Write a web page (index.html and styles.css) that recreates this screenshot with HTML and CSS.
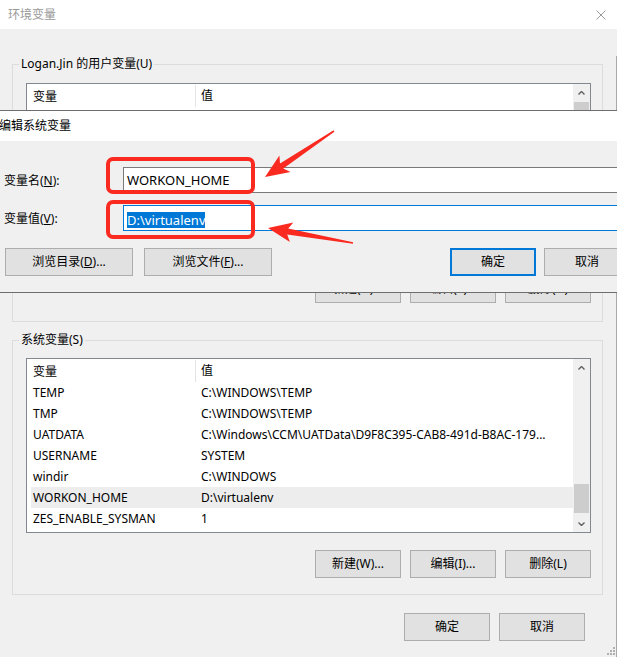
FILE: index.html
```html
<!DOCTYPE html>
<html lang="zh-CN">
<head>
<meta charset="utf-8">
<title>环境变量</title>
<link rel="stylesheet" href="styles.css">
</head>
<body>
<div class="win">
  <div class="titlebar">
    <span class="title">环境变量</span>
    <svg class="close" width="10" height="10" viewBox="0 0 10 10"><path d="M0.5 0.5 L9.5 9.5 M9.5 0.5 L0.5 9.5" stroke="#9a9a9a" stroke-width="1" fill="none"/></svg>
  </div>
  <div class="body">
    <fieldset class="group g1">
      <legend>Logan.Jin 的用户变量(U)</legend>
      <div class="group-inner">
        <div class="list">
          <div class="list-main">
            <div class="list-head"><div class="hcol1">变量</div><div class="hcol2">值</div></div>
            <div class="rows">
              <div class="row"><div class="c1">OneDrive</div><div class="c2">C:\Users\Logan.Jin\OneDrive</div></div>
              <div class="row"><div class="c1">Path</div><div class="c2">C:\Users\Logan.Jin\AppData\Local\Microsoft\WindowsApps;</div></div>
              <div class="row"><div class="c1">TEMP</div><div class="c2">C:\Users\Logan.Jin\AppData\Local\Temp</div></div>
              <div class="row"><div class="c1">TMP</div><div class="c2">C:\Users\Logan.Jin\AppData\Local\Temp</div></div>
            </div>
          </div>
          <div class="vscroll">
            <div class="sbtn"><svg width="7" height="4" viewBox="0 0 7 4"><path d="M0.5 3.5 L3.5 0.5 L6.5 3.5" stroke="#606060" stroke-width="1.4" fill="none"/></svg></div>
            <div class="track"><div class="thumb" style="margin-top:1px;height:60px"></div></div>
            <div class="sbtn"><svg width="7" height="4" viewBox="0 0 7 4"><path d="M0.5 0.5 L3.5 3.5 L6.5 0.5" stroke="#606060" stroke-width="1.4" fill="none"/></svg></div>
          </div>
        </div>
        <div class="btnrow">
          <button class="btn">新建(N)...</button>
          <button class="btn">编辑(E)...</button>
          <button class="btn">删除(D)</button>
        </div>
      </div>
    </fieldset>

    <fieldset class="group g2">
      <legend>系统变量(S)</legend>
      <div class="group-inner">
        <div class="list">
          <div class="list-main">
            <div class="list-head"><div class="hcol1">变量</div><div class="hcol2">值</div></div>
            <div class="rows">
              <div class="row"><div class="c1">TEMP</div><div class="c2">C:\WINDOWS\TEMP</div></div>
              <div class="row"><div class="c1">TMP</div><div class="c2">C:\WINDOWS\TEMP</div></div>
              <div class="row"><div class="c1">UATDATA</div><div class="c2">C:\Windows\CCM\UATData\D9F8C395-CAB8-491d-B8AC-179...</div></div>
              <div class="row"><div class="c1">USERNAME</div><div class="c2">SYSTEM</div></div>
              <div class="row"><div class="c1">windir</div><div class="c2">C:\WINDOWS</div></div>
              <div class="row sel"><div class="c1">WORKON_HOME</div><div class="c2">D:\virtualenv</div></div>
              <div class="row"><div class="c1">ZES_ENABLE_SYSMAN</div><div class="c2">1</div></div>
            </div>
          </div>
          <div class="vscroll">
            <div class="sbtn"><svg width="7" height="4" viewBox="0 0 7 4"><path d="M0.5 3.5 L3.5 0.5 L6.5 3.5" stroke="#606060" stroke-width="1.4" fill="none"/></svg></div>
            <div class="track"><div class="thumb" style="margin-top:108px;height:29px"></div></div>
            <div class="sbtn"><svg width="7" height="4" viewBox="0 0 7 4"><path d="M0.5 0.5 L3.5 3.5 L6.5 0.5" stroke="#606060" stroke-width="1.4" fill="none"/></svg></div>
          </div>
        </div>
        <div class="btnrow">
          <button class="btn">新建(W)...</button>
          <button class="btn">编辑(I)...</button>
          <button class="btn">删除(L)</button>
        </div>
      </div>
    </fieldset>

    <div class="footer">
      <button class="btn">确定</button>
      <button class="btn">取消</button>
    </div>
  </div>
  <svg class="grip" width="10" height="10" viewBox="0 0 10 10">
    <rect x="8" y="2" width="2" height="2" fill="#b0b0b0"/>
    <rect x="5" y="5" width="2" height="2" fill="#b0b0b0"/>
    <rect x="8" y="5" width="2" height="2" fill="#b0b0b0"/>
    <rect x="2" y="8" width="2" height="2" fill="#b0b0b0"/>
    <rect x="5" y="8" width="2" height="2" fill="#b0b0b0"/>
    <rect x="8" y="8" width="2" height="2" fill="#b0b0b0"/>
  </svg>

  <div class="dialog">
    <div class="dlg-title">编辑系统变量</div>
    <div class="dlg-body">
      <div class="frow">
        <label class="flabel">变量名(<u>N</u>):</label>
        <div class="field">WORKON_HOME</div>
      </div>
      <div class="frow">
        <label class="flabel">变量值(<u>V</u>):</label>
        <div class="field focus"><span class="selected">D:\virtualenv</span></div>
      </div>
      <div class="dlg-btns">
        <button class="btn wide">浏览目录(<u>D</u>)...</button>
        <button class="btn wide">浏览文件(<u>F</u>)...</button>
        <button class="btn default">确定</button>
        <button class="btn">取消</button>
      </div>
    </div>
  </div>

  <svg class="annot" width="617" height="657" viewBox="0 0 617 657">
    <rect x="108" y="159" width="145" height="33" rx="5" ry="5" fill="none" stroke="#fa2a20" stroke-width="4"/>
    <rect x="108" y="202" width="145" height="35" rx="5" ry="5" fill="none" stroke="#fa2a20" stroke-width="4"/>
    <polygon fill="#fa2a20" points="265,177 290.5,172 283.3,168.4 334.4,131.7 333.6,130.3 280,163.4 279.4,155.4"/>
    <polygon fill="#fa2a20" points="268,228 289.9,242 287.2,234.5 352.9,243.8 353.1,242.2 288.2,228.5 293.3,222.4"/>
  </svg>
</div>
</body>
</html>
```

FILE: styles.css
```css
* { box-sizing: border-box; }

body {
  margin: 0;
  background: #f0f0f0;
  font-family: "Noto Sans", "Noto Sans CJK SC", sans-serif;
  font-size: 12px;
  color: #000;
}

.win {
  position: relative;
  width: 617px;
  height: 657px;
  overflow: hidden;
  background: #f0f0f0;
}

.titlebar {
  height: 29px;
  background: #fff;
  display: flex;
  align-items: center;
  justify-content: space-between;
  padding: 0 11px 0 8px;
}

.title {
  color: #9a9a9a;
  line-height: 16px;
}

.close { display: block; }

.body {
  height: 628px;
  padding: 0 13px 0 12px;
  border-right: 1px solid #a8a8a8;
}

.group {
  margin: 0;
  padding: 0;
  min-width: 0;
  border: 1px solid #dcdcdc;
}

.g1 { margin-top: 27px; }
.g2 { margin-top: 10px; }

.group legend {
  margin-left: 6px;
  padding: 0 2px;
  line-height: 16px;
}

.group-inner { padding: 11px 11px 18px 13px; }
.g2 .group-inner { padding-top: 10px; padding-bottom: 16px; }

.list {
  height: 175px;
  border: 1px solid #828790;
  background: #fff;
  display: flex;
}

.list-main {
  flex: 1;
  min-width: 0;
  overflow: hidden;
}

.list-head {
  display: flex;
  height: 23px;
}

.hcol1 {
  width: 169px;
  padding-left: 6px;
  line-height: 23px;
  border-right: 1px solid #e5e5e5;
  margin-top: 1px;
}

.hcol2 {
  flex: 1;
  padding-left: 5px;
  line-height: 23px;
}

.rows { margin-left: 4px; }

.row {
  display: flex;
  height: 21px;
  line-height: 21px;
}

.row.sel { background: #ededed; }

.c1 {
  width: 164px;
  padding-left: 2px;
  white-space: nowrap;
}

.c2 {
  flex: 1;
  padding-left: 6px;
  white-space: nowrap;
  overflow: hidden;
}

.vscroll {
  width: 17px;
  background: #f0f0f0;
  display: flex;
  flex-direction: column;
}

.sbtn {
  height: 17px;
  display: flex;
  align-items: center;
  justify-content: center;
}

.sbtn svg { display: block; }

.track { flex: 1; }

.thumb {
  margin: 0 1px;
  background: #cdcdcd;
}

.btnrow {
  display: flex;
  justify-content: flex-end;
  gap: 9px;
  margin-top: 17px;
}

.btn {
  width: 86px;
  height: 28px;
  padding: 0;
  border: 1px solid #adadad;
  background: #e1e1e1;
  font: inherit;
  color: #000;
  display: flex;
  align-items: center;
  justify-content: center;
  line-height: 16px;
}

.footer {
  display: flex;
  justify-content: flex-end;
  gap: 9px;
  margin-top: 18px;
  padding-right: 18px;
}

.grip {
  position: absolute;
  right: 2px;
  bottom: 2px;
}

/* Edit dialog overlapping the parent window */
.dialog {
  position: absolute;
  left: -10px;
  top: 110px;
  width: 656px;
  border: 1px solid #6e6e6e;
  background: #f0f0f0;
}

.dlg-title {
  height: 30px;
  background: #fff;
  padding-left: 8px;
  line-height: 30px;
}

.dlg-body { padding: 26px 15px 16px 13px; }

.frow {
  display: flex;
  align-items: center;
  height: 26px;
}

.frow + .frow { margin-top: 12px; }

.flabel {
  width: 119px;
  flex: none;
}

.field {
  flex: 1;
  height: 26px;
  background: #fff;
  border: 1px solid #7a7a7a;
  padding-left: 3px;
  font-size: 13px;
  line-height: 24px;
  white-space: nowrap;
}

.field.focus { border-color: #0078d7; }

.selected {
  background: #0078d7;
  color: #fff;
  display: inline-block;
  line-height: 16px;
  vertical-align: middle;
}

.dlg-btns {
  display: flex;
  gap: 8px;
  margin-top: 17px;
  padding-left: 1px;
}

.dlg-btns .wide { width: 128px; }
.dlg-btns .wide + .wide { margin-left: 3px; }

.dlg-btns .default {
  margin-left: auto;
  border: 2px solid #0078d7;
}

.annot {
  position: absolute;
  left: 0;
  top: 0;
  pointer-events: none;
}
```
